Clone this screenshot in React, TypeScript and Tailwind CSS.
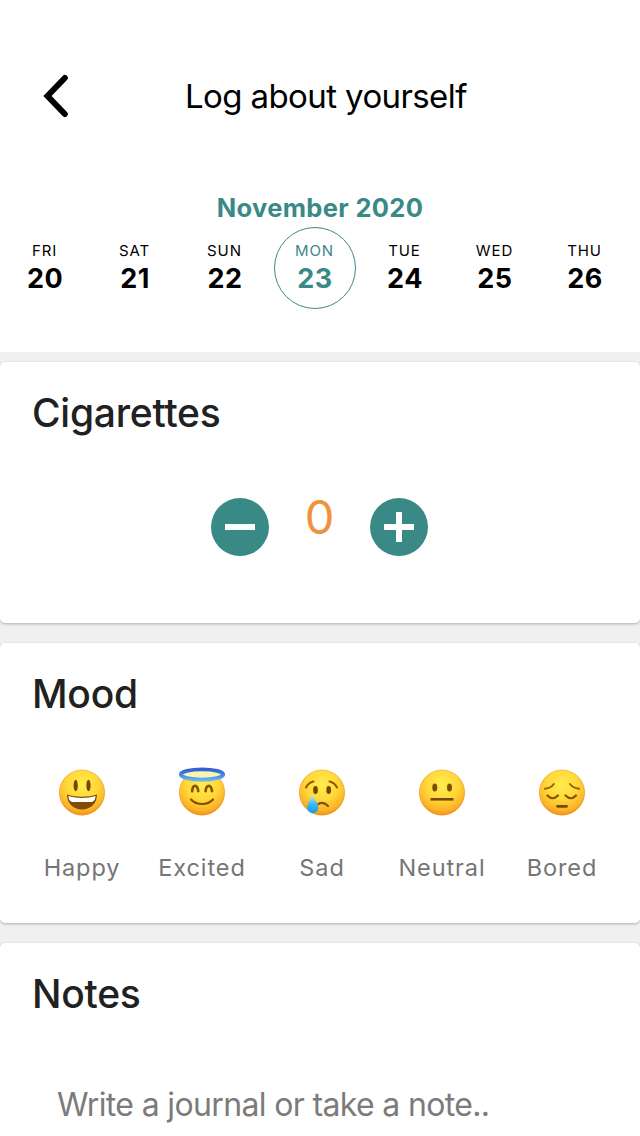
import React from "react";

const days = [
  { name: "FRI", date: 20 },
  { name: "SAT", date: 21 },
  { name: "SUN", date: 22 },
  { name: "MON", date: 23, selected: true },
  { name: "TUE", date: 24 },
  { name: "WED", date: 25 },
  { name: "THU", date: 26 },
];

function Happy() {
  return (
    <>
      <ellipse cx="18.7" cy="18.5" rx="2.1" ry="5.8" fill="#774400" />
      <ellipse cx="31.5" cy="18.5" rx="2.1" ry="5.8" fill="#774400" />
      <path d="M10 27.5C20 30.5 30 30.5 40 27.5C40 36 34 42.5 25 42.5S10 36 10 27.5Z" fill="#804b05" />
      <path d="M11.5 29C20 31.5 30 31.5 38.5 29C38.3 33.8 36 35 34 35H16C14 35 11.7 33.8 11.5 29Z" fill="#fff" />
    </>
  );
}

function Excited() {
  return (
    <>
      <path d="M15.200 24.200C15.500 17 20.500 17 21.200 24.200M28.600 24.200C29.200 17 34.200 17 35 24.200" fill="none" stroke="#8b5302" strokeWidth="2.700" strokeLinecap="round" />
      <path d="M14 32.500C19.500 38.500 30.500 38.500 36 32.500" fill="none" stroke="#874d02" strokeWidth="2.200" strokeLinecap="round" />
      <ellipse cx="25" cy="7.500" rx="21.200" ry="5.200" fill="#fff3b0" stroke="url(#halo)" strokeWidth="3.800" />
    </>
  );
}

function Sad() {
  return (
    <>
      <path d="M9 20.500Q11.500 15.500 16.500 14.500M32.500 14.500Q37.500 15.500 40 20.500" fill="none" stroke="#935900" strokeWidth="2" strokeLinecap="round" />
      <ellipse cx="18.500" cy="23" rx="2.400" ry="4" fill="#774400" />
      <ellipse cx="31.700" cy="23" rx="2.400" ry="4" fill="#774400" />
      <path d="M20 38Q25.500 33.500 31 39" fill="none" stroke="#85500a" strokeWidth="2.200" strokeLinecap="round" />
      <path d="M15.500 27.500C14 33 10 36 10 40.500A5.700 5.700 0 0 0 21.400 40.500C21.400 36 17 33 15.500 27.500Z" fill="url(#tear)" />
    </>
  );
}

function Neutral() {
  return (
    <>
      <ellipse cx="17.800" cy="20.500" rx="2.500" ry="4.100" fill="#804c00" />
      <ellipse cx="32.500" cy="20.500" rx="2.500" ry="4.100" fill="#804c00" />
      <path d="M13.500 32.300H36.500" stroke="#7b4903" strokeWidth="2.600" />
    </>
  );
}

function Bored() {
  return (
    <>
      <path d="M8 21.800Q14 21 16.800 17M33 17Q36 21 42 21.800" fill="none" stroke="#9a6005" strokeWidth="2" strokeLinecap="round" />
      <path d="M10.500 28.500Q15.500 34 21 28.500M28.500 28.500Q34 34 39 28.500" fill="none" stroke="#8a5207" strokeWidth="2.200" strokeLinecap="round" />
      <path d="M20.500 39.300H29.500" stroke="#7c4808" strokeWidth="2.800" strokeLinecap="round" />
    </>
  );
}

const moods = [
  { label: "Happy", Face: Happy },
  { label: "Excited", Face: Excited },
  { label: "Sad", Face: Sad },
  { label: "Neutral", Face: Neutral },
  { label: "Bored", Face: Bored },
];

function Card({ title, className, children }: { title: string; className: string; children: React.ReactNode }) {
  return (
    <section className={`rounded-[5px] bg-white shadow-[0_1px_3px_rgba(0,0,0,0.28)] ${className}`}>
      <h2 className="pt-[31px] pl-8 text-[39px] leading-10 font-medium tracking-[-0.25px] text-[#212121]">{title}</h2>
      {children}
    </section>
  );
}

export default function App() {
  return (
    <main className="flex h-[1136px] w-[640px] flex-col overflow-hidden bg-[#f0f0f0] font-['Inter',sans-serif] whitespace-nowrap">
      <svg className="absolute size-0" aria-hidden="true">
        <defs>
          <radialGradient id="face" cx="50%" cy="32%" r="70%">
            <stop offset="0" stopColor="#ffed4f" />
            <stop offset="0.5" stopColor="#ffd838" />
            <stop offset="0.82" stopColor="#fdb428" />
            <stop offset="1" stopColor="#ef8d16" />
          </radialGradient>
          <linearGradient id="rim" x1="0" y1="0" x2="0" y2="1">
            <stop offset="0" stopColor="#fbbd4a" />
            <stop offset="1" stopColor="#ed8d19" />
          </linearGradient>
          <linearGradient id="halo" x1="0" y1="0" x2="0" y2="1">
            <stop offset="0" stopColor="#3262d2" />
            <stop offset="0.5" stopColor="#3f83e0" />
            <stop offset="1" stopColor="#64b4f6" />
          </linearGradient>
          <linearGradient id="tear" x1="0" y1="0" x2="0" y2="1">
            <stop offset="0" stopColor="#b8f0ff" />
            <stop offset="0.5" stopColor="#43b8f5" />
            <stop offset="1" stopColor="#139be5" />
          </linearGradient>
        </defs>
      </svg>

      <div className="h-[352px] shrink-0 bg-white">
        <header className="flex h-[192px] items-center">
          <button className="ml-9 flex h-12 w-10 items-center justify-center" aria-label="Back">
            <svg className="h-12 w-10" viewBox="0 0 40 48" fill="none" stroke="#000" strokeWidth="6" strokeLinecap="round">
              <path d="M28.800 6L11.500 24L28.800 42" />
            </svg>
          </button>
          <h1 className="ml-[109px] text-[33px] leading-10 tracking-[-0.6px] text-black">Log about yourself</h1>
        </header>
        <p className="text-center text-[25.500px] leading-8 font-bold tracking-[0.35px] text-[#398a87]">November 2020</p>
        <div className="mt-[3px] flex">
          {days.map((d) => (
            <div key={d.date} className="flex w-[90px] shrink-0 justify-center">
              <div
                className={`flex size-[82px] shrink-0 flex-col items-center rounded-full border pt-[13px] ${
                  d.selected ? "border-[#398a87] text-[#398a87]" : "border-transparent text-black"
                }`}
              >
                <span className="mr-[1px] text-[15px] leading-5 tracking-[0.9px]">{d.name}</span>
                <span className="mt-[2px] text-[27px] leading-8 font-bold tracking-[0.5px]">{d.date}</span>
              </div>
            </div>
          ))}
        </div>
      </div>

      <Card title="Cigarettes" className="mt-[10px] h-[261px] shrink-0">
        <div className="mt-[65px] flex pl-[211px]">
          <button className="size-[58px] rounded-full bg-[#398a87]" aria-label="Remove one">
            <svg viewBox="0 0 58 58" stroke="#fff" strokeWidth="6">
              <path d="M14 29H44" />
            </svg>
          </button>
          <span className="-mt-[10px] w-[101px] text-center text-[47px] leading-[58px] text-[#f0923b]">0</span>
          <button className="size-[58px] rounded-full bg-[#398a87]" aria-label="Add one">
            <svg viewBox="0 0 58 58" stroke="#fff" strokeWidth="6">
              <path d="M14 29H44M29 14V44" />
            </svg>
          </button>
        </div>
      </Card>

      <Card title="Mood" className="mt-5 h-[280px] shrink-0">
        <div className="mt-[53px] flex pl-[22px]">
          {moods.map(({ label, Face }) => (
            <div key={label} className="flex w-[120px] shrink-0 flex-col items-center">
              <svg className="size-[50px] overflow-visible" viewBox="0 0 50 50" aria-hidden="true">
                <circle cx="25" cy="25.500" r="22.500" fill="url(#face)" stroke="url(#rim)" />
                <Face />
              </svg>
              <span className="mt-[35px] text-[23.500px] leading-8 tracking-[0.9px] text-[#757575]">{label}</span>
            </div>
          ))}
        </div>
      </Card>

      <Card title="Notes" className="mt-5 h-[280px] shrink-0">
        <p className="mt-[71px] ml-[57px] text-[32px] leading-10 tracking-[-0.65px] text-[#7b7b7b]">Write a journal or take a note..</p>
      </Card>
    </main>
  );
}
